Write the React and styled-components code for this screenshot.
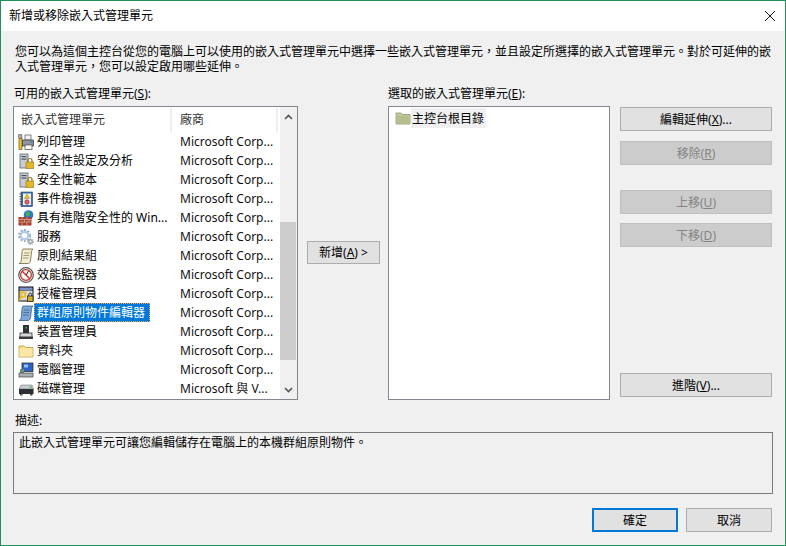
import React from 'react';
import styled, { createGlobalStyle } from 'styled-components';

const Global = createGlobalStyle`
html, body { margin: 0; padding: 0; background: #f0f0f0; }
* { box-sizing: border-box; }
body { font-family: "Noto Sans", "Noto Sans CJK TC", sans-serif; font-size: 12px; color: #000; }
`

const Dialog = styled.div`
width: 786px;
height: 546px;
border: 1px solid #1f8f5c;
background: #f0f0f0;
display: flex;
flex-direction: column;
overflow: hidden;
`
const TitleBar = styled.div`
height: 30px;
background: #fff;
display: flex;
align-items: center;
justify-content: space-between;
padding: 0 10px 0 8px;
flex: none;
`
const Title = styled.span`
line-height: 16px;
`
const CloseIcon = styled.svg`
width: 10px;
height: 10px;
margin-top: -1px;
`
const Body = styled.div`
flex: 1;
display: flex;
flex-direction: column;
padding: 13px 13px 0 12px;
`
const Intro = styled.p`
margin: 0 0 12px 2px;
line-height: 15px;
width: 760px;
`
const Columns = styled.div`
display: grid;
grid-template-columns: 285px 90px 222px 162px;
grid-template-rows: 20px 294px;
`
const ColLabel = styled.div`
padding-left: ${p => p.$indent || 0}px;
line-height: 16px;
`
const Key = styled.span`
text-decoration: underline;
`
const ListBox = styled.div`
border: 1px solid #828790;
background: #fff;
display: flex;
overflow: hidden;
`
const ListMain = styled.div`
flex: 1;
display: flex;
flex-direction: column;
overflow: hidden;
`
const Header = styled.div`
display: grid;
grid-template-columns: 158px 106px;
height: 24px;
flex: none;
margin-top: 1px;
`
const HeaderCell = styled.div`
padding-left: ${p => p.$left}px;
line-height: 24px;
color: #333;
border-right: 2px solid #eee;
`
const Row = styled.div`
display: grid;
grid-template-columns: 158px 106px;
height: 19px;
flex: none;
line-height: 19px;
`
const NameCell = styled.div`
display: flex;
align-items: center;
padding-left: 4px;
white-space: nowrap;
`
const IconBox = styled.svg`
width: 16px;
height: 16px;
flex: none;
`
const Name = styled.span`
height: 19px;
padding: 0 5px 0 3px;
line-height: 20px;
background: ${p => p.$selected ? '#0078d7' : 'transparent'};
color: ${p => p.$selected ? '#fff' : '#000'};
outline: ${p => p.$selected ? '1px dotted #f5a34a' : 'none'};
outline-offset: -1px;
`
const Vendor = styled.div`
padding-left: 8px;
white-space: nowrap;
color: #111;
`
const ScrollBar = styled.div`
width: 17px;
flex: none;
background: #f0f0f0;
display: flex;
flex-direction: column;
`
const ScrollArrow = styled.div`
height: 19px;
flex: none;
display: flex;
align-items: center;
justify-content: center;
`
const ScrollTrack = styled.div`
flex: 1;
padding: 96px 1px 20px 0;
display: flex;
`
const ScrollThumb = styled.div`
flex: 1;
background: #cdcdcd;
`
const Middle = styled.div`
display: flex;
align-items: center;
justify-content: center;
padding: 0 0 2px 1px;
`
const Button = styled.button`
font: inherit;
width: ${p => p.$w || 152}px;
height: ${p => p.$h || 24}px;
padding: 1px 0 0;
background: ${p => p.disabled ? '#cccccc' : '#e1e1e1'};
border: ${p => p.$primary ? '2px solid #0078d7' : p.disabled ? '1px solid #bfbfbf' : '1px solid #adadad'};
color: ${p => p.disabled ? '#838383' : '#000'};
line-height: 20px;
flex: none;
`
const TreeItem = styled.div`
display: flex;
align-items: center;
padding: 1px 0 0 6px;
height: 20px;
`
const TreeLabel = styled.span`
background: #f0f0f0;
padding: 1px 2px 0 1px;
margin-left: 0;
line-height: 19px;
`
const Side = styled.div`
display: flex;
flex-direction: column;
align-items: flex-end;
padding: 1px 0 3px 0;
`
const ButtonGap = styled.div`
height: ${p => p.$h}px;
flex: ${p => p.$grow ? 1 : 'none'};
`
const DescLabel = styled.div`
margin: 13px 0 3px 2px;
line-height: 16px;
`
const DescBox = styled.div`
height: 62px;
width: 760px;
border: 1px solid #7a7a7a;
padding: 2px 5px;
line-height: 16px;
`
const Footer = styled.div`
display: flex;
justify-content: flex-end;
gap: 8px;
margin-top: 14px;
`

const Icon = ({ children }) => <IconBox viewBox="0 0 16 16">{children}</IconBox>;

const Lock = () => (
  <>
    <path d="M10 9V7.5a2 2 0 0 1 4 0V9" fill="none" stroke="#8a7420" strokeWidth="1.2" />
    <rect x="8" y="9" width="8" height="6.5" fill="#e3b62c" stroke="#8f7414" strokeWidth=".6" />
  </>
);

const icons = {
  print: (
    <Icon>
      <path d="M0.5 0.5h3.5v3l-1 1h-1.5l-1-1z" fill="#a8a8a8" stroke="#555" strokeWidth=".5" />
      <rect x="1" y="4.5" width="3" height="11" fill="#f0c030" stroke="#6b5a10" strokeWidth=".7" />
      <rect x="7" y="1" width="6" height="5" fill="#f4f4f4" stroke="#555" strokeWidth=".7" />
      <rect x="4.5" y="6" width="11" height="6" fill="#8e979f" stroke="#333" strokeWidth=".7" />
      <rect x="7" y="11" width="7" height="4.5" fill="#fff" stroke="#444" strokeWidth=".7" />
      <rect x="12.5" y="7.5" width="2" height="1" fill="#2f6fb0" />
    </Icon>
  ),
  shield: (
    <Icon>
      <rect x="2" y="1" width="8" height="14" fill="#c9cdd1" stroke="#5f6870" strokeWidth=".8" />
      <rect x="3.5" y="3" width="5" height="1.2" fill="#4b5560" />
      <rect x="3.5" y="5.5" width="5" height="1.2" fill="#4b5560" />
      <Lock />
    </Icon>
  ),
  event: (
    <Icon>
      <rect x="3" y="1" width="11.5" height="14.5" fill="#3f6fa8" stroke="#2a4570" strokeWidth=".6" />
      <rect x="5" y="2.5" width="8" height="11.5" fill="#eef1f5" />
      <path d="M1.5 3h3M1.5 5.5h3M1.5 8h3M1.5 10.5h3M1.5 13h3" stroke="#555" strokeWidth="1" />
      <path d="M9 3l2.6 4.5H6.4z" fill="#f2c21f" stroke="#806510" strokeWidth=".4" />
      <circle cx="9" cy="11" r="2.2" fill="#d96a6a" stroke="#8c2020" strokeWidth=".6" />
    </Icon>
  ),
  firewall: (
    <Icon>
      <circle cx="10.5" cy="5" r="4.8" fill="#2a78d0" />
      <path d="M8 2c2-1 4 0 4 2s-2 2-3 2-2-2-1-4z" fill="#46b04a" />
      <rect x="0.5" y="7" width="13" height="8.5" fill="#a5402f" />
      <path d="M.5 9.5h13M.5 12h13M4 7v2.5M9 7v2.5M6.5 9.5V12M11 9.5V12M4 12v3.5M9 12v3.5" stroke="#e0b8a8" strokeWidth=".7" />
    </Icon>
  ),
  service: (
    <Icon>
      <circle cx="6.5" cy="6.5" r="3.8" fill="none" stroke="#b4cbe3" strokeWidth="2.4" />
      <circle cx="6.5" cy="6.5" r="5.6" fill="none" stroke="#8fa9c6" strokeWidth="1.6" strokeDasharray="2 1.6" />
      <circle cx="12.5" cy="12.5" r="1.8" fill="none" stroke="#9aa4ae" strokeWidth="1.4" />
      <circle cx="12.5" cy="12.5" r="3" fill="none" stroke="#9aa4ae" strokeWidth="1" strokeDasharray="1.2 1" />
    </Icon>
  ),
  scroll: (
    <Icon>
      <path d="M5 1h10c-1 1-1.500 2-1.500 3L12.500 13c-.3 1.500-1.500 2.500-2.500 2.500H1c1-.5 2-1.500 2.200-2.500L4 4c.1-1 .2-2 1-3z" fill="#f4ecd0" stroke="#6f6644" strokeWidth=".8" />
      <path d="M6 5h5.500M5.500 7.500h5.500M5 10h5.500" stroke="#8e8565" strokeWidth=".8" />
    </Icon>
  ),
  perf: (
    <Icon>
      <circle cx="8" cy="8" r="7.3" fill="#f6f6f6" stroke="#555" strokeWidth="1.2" />
      <circle cx="8" cy="8" r="5.4" fill="none" stroke="#c93a30" strokeWidth="1.3" />
      <path d="M4.200 4.200L11.800 11.800" stroke="#c93a30" strokeWidth="1.4" />
      <path d="M8 8L10.500 4" stroke="#222" strokeWidth="1" />
    </Icon>
  ),
  auth: (
    <Icon>
      <rect x="0.5" y="0.5" width="15" height="15" fill="#111" />
      <rect x="1.500" y="1.500" width="13" height="2.500" fill="#7f8fc8" />
      <rect x="1.500" y="4.500" width="13" height="10" fill="#d8d8d8" />
      <circle cx="5" cy="8.500" r="2.400" fill="none" stroke="#e8bd1c" strokeWidth="1.800" />
      <path d="M3.500 10.500l-2 4" stroke="#e8bd1c" strokeWidth="1.800" />
      <rect x="9.500" y="10" width="5.500" height="5.500" fill="#d6ac22" stroke="#222" strokeWidth=".7" />
      <path d="M10.800 10V8.500a1.400 1.400 0 0 1 2.800 0V10" fill="none" stroke="#222" strokeWidth=".9" />
    </Icon>
  ),
  gpo: (
    <Icon>
      <path d="M5 1h10c-1 1-1.500 2-1.500 3L12.500 13c-.3 1.500-1.500 2.500-2.500 2.500H1c1-.5 2-1.500 2.200-2.500L4 4c.1-1 .2-2 1-3z" fill="#7ea6d4" stroke="#35608f" strokeWidth=".8" />
      <path d="M6 5h5.500M5.500 7.500h5.500M5 10h5.500" stroke="#38659a" strokeWidth=".8" />
    </Icon>
  ),
  device: (
    <Icon>
      <rect x="5" y="1" width="6" height="8" fill="#2f3337" />
      <rect x="7.500" y="3" width="1.500" height="1.500" fill="#35c050" />
      <rect x="2" y="9" width="12" height="5.500" fill="#d4d6d8" stroke="#333" strokeWidth=".8" />
      <rect x="1" y="12.500" width="14" height="2.500" fill="#3a3d40" />
    </Icon>
  ),
  folder: (
    <Icon>
      <path d="M1 3h5l1.500 1.500H15V14H1z" fill="#f7dc85" stroke="#b99b45" strokeWidth=".8" />
      <rect x="1.500" y="5.500" width="13" height="8" fill="#fbe8a8" />
    </Icon>
  ),
  computer: (
    <Icon>
      <rect x="4" y="1" width="11" height="8.500" fill="#2c62c4" stroke="#333" strokeWidth=".8" />
      <rect x="6" y="2.500" width="4" height="3" fill="#9cc2ef" />
      <path d="M2 7h4v8H2z" fill="#7b8a80" />
      <rect x="1" y="11" width="14" height="4" fill="#aab0b4" stroke="#444" strokeWidth=".7" />
      <rect x="2.500" y="8.500" width="2" height="1.500" fill="#3aa860" />
    </Icon>
  ),
  disk: (
    <Icon>
      <path d="M3 4h11l1.500 4H1z" fill="#c8cccf" stroke="#666" strokeWidth=".5" />
      <rect x="1" y="8" width="14.500" height="5" fill="#2c2f33" />
      <rect x="11.500" y="5.500" width="2.500" height="1.200" fill="#34c257" />
      <rect x="2" y="13" width="2.500" height="1.500" fill="#555" />
      <rect x="12" y="13" width="2.500" height="1.500" fill="#555" />
    </Icon>
  ),
};

const rows = [
  ['print', '列印管理'],
  ['shield', '安全性設定及分析'],
  ['shield', '安全性範本'],
  ['event', '事件檢視器'],
  ['firewall', '具有進階安全性的 Win...'],
  ['service', '服務'],
  ['scroll', '原則結果組'],
  ['perf', '效能監視器'],
  ['auth', '授權管理員'],
  ['gpo', '群組原則物件編輯器', true],
  ['device', '裝置管理員'],
  ['folder', '資料夾'],
  ['computer', '電腦管理'],
  ['disk', '磁碟管理', false, 'Microsoft 與 V...'],
];

const App = () => {
  return (
    <Dialog lang="zh-TW">
      <Global />
      <TitleBar>
        <Title>新增或移除嵌入式管理單元</Title>
        <CloseIcon viewBox="0 0 10 10">
          <path d="M0 0L10 10M10 0L0 10" stroke="#111" strokeWidth="1" />
        </CloseIcon>
      </TitleBar>
      <Body>
        <Intro>您可以為這個主控台從您的電腦上可以使用的嵌入式管理單元中選擇一些嵌入式管理單元，並且設定所選擇的嵌入式管理單元。對於可延伸的嵌入式管理單元，您可以設定啟用哪些延伸。</Intro>
        <Columns>
          <ColLabel $indent={1}>可用的嵌入式管理單元(<Key>S</Key>):</ColLabel>
          <div />
          <ColLabel>選取的嵌入式管理單元(<Key>E</Key>):</ColLabel>
          <div />
          <ListBox>
            <ListMain>
              <Header>
                <HeaderCell $left={7}>嵌入式管理單元</HeaderCell>
                <HeaderCell $left={8}>廠商</HeaderCell>
              </Header>
              {rows.map(([icon, name, selected, vendor]) => (
                <Row key={name}>
                  <NameCell>
                    {icons[icon]}
                    <Name $selected={selected}>{name}</Name>
                  </NameCell>
                  <Vendor>{vendor || 'Microsoft Corp...'}</Vendor>
                </Row>
              ))}
            </ListMain>
            <ScrollBar>
              <ScrollArrow>
                <svg width="9" height="6" viewBox="0 0 9 6"><path d="M1 5l3.500-3.500L8 5" fill="none" stroke="#555" strokeWidth="1.600" /></svg>
              </ScrollArrow>
              <ScrollTrack><ScrollThumb /></ScrollTrack>
              <ScrollArrow>
                <svg width="9" height="6" viewBox="0 0 9 6"><path d="M1 1l3.500 3.500L8 1" fill="none" stroke="#555" strokeWidth="1.600" /></svg>
              </ScrollArrow>
            </ScrollBar>
          </ListBox>
          <Middle>
            <Button $w={73} $h={23}>新增(<Key>A</Key>) &gt;</Button>
          </Middle>
          <ListBox>
            <ListMain>
              <TreeItem>
                <IconBox viewBox="0 0 16 16">
                  <path d="M1 3h5l1.500 1.500H15V14H1z" fill="#c5cda0" stroke="#8f9670" strokeWidth=".8" />
                  <rect x="1.500" y="5.500" width="13" height="8" fill="#b6bf8e" />
                </IconBox>
                <TreeLabel>主控台根目錄</TreeLabel>
              </TreeItem>
            </ListMain>
          </ListBox>
          <Side>
            <Button>編輯延伸(<Key>X</Key>)...</Button>
            <ButtonGap $h={10} />
            <Button disabled>移除(<Key>R</Key>)</Button>
            <ButtonGap $h={25} />
            <Button disabled>上移(<Key>U</Key>)</Button>
            <ButtonGap $h={9} />
            <Button disabled>下移(<Key>D</Key>)</Button>
            <ButtonGap $grow />
            <Button>進階(<Key>V</Key>)...</Button>
          </Side>
        </Columns>
        <DescLabel>描述:</DescLabel>
        <DescBox>此嵌入式管理單元可讓您編輯儲存在電腦上的本機群組原則物件。</DescBox>
        <Footer>
          <Button $w={86} $primary>確定</Button>
          <Button $w={86}>取消</Button>
        </Footer>
      </Body>
    </Dialog>
  );
};

export default App;
